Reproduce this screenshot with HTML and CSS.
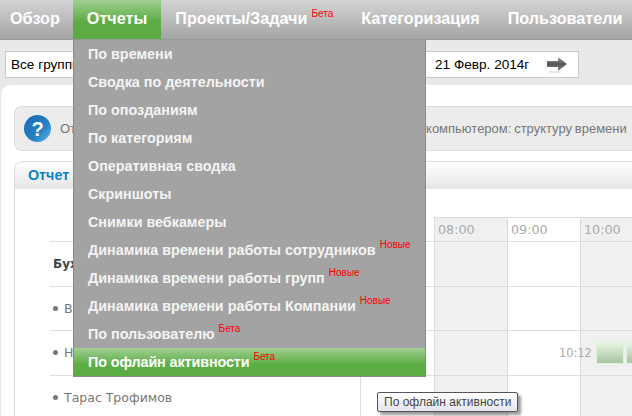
FILE: index.html
```html
<!DOCTYPE html>
<html lang="ru">
<head>
<meta charset="utf-8">
<title>Отчеты</title>
<link rel="stylesheet" href="styles.css">
</head>
<body>
<nav class="nav">
  <a class="nav-item nav-first">Обзор</a>
  <a class="nav-item nav-active">Отчеты</a>
  <a class="nav-item">Проекты/Задачи<sup class="tag">Бета</sup></a>
  <a class="nav-item">Категоризация</a>
  <a class="nav-item">Пользователи</a>
</nav>
<section class="toolbar">
  <div class="group-select">Все группы</div>
  <div class="date-box">
    <span class="date">21 Февр. 2014г</span>
    <svg class="arrow" width="22" height="18" viewBox="0 0 22 18"><defs><linearGradient id="ag" x1="0" y1="0" x2="0" y2="1"><stop offset="0" stop-color="#a8a8a8"/><stop offset=".5" stop-color="#555"/><stop offset="1" stop-color="#8a8a8a"/></linearGradient></defs><path d="M1 5h11V1l9 7-9 7v-4H1z" fill="url(#ag)"/><path d="M3 16h12" stroke="#ddd" stroke-width="1.5"/></svg>
  </div>
</section>
<main class="content">
  <div class="info">
    <svg class="help" width="27" height="27" viewBox="0 0 27 27"><defs><linearGradient id="hg" x1="0" y1="0" x2="1" y2="1"><stop offset="0" stop-color="#1d69ad"/><stop offset=".6" stop-color="#2580c4"/><stop offset="1" stop-color="#5cbfe8"/></linearGradient></defs><circle cx="13.5" cy="13.5" r="13.5" fill="url(#hg)"/><text x="13.5" y="20.5" class="help-mark">?</text></svg>
    <p class="info-text">Отчет показывает, как сотрудники в течение дня работают за компьютером: структуру времени</p>
  </div>
  <div class="report">
    <div class="report-tab">Отчет по времени</div>
    <div class="timeline">
      <div class="cell head-blank"></div>
      <div class="cell hour hour-hidden"></div><div class="cell hour shade">08:00</div><div class="cell hour">09:00</div><div class="cell hour shade">10:00</div>
      <div class="cell name group">Бухгалтерия</div>
      <div class="cell"></div><div class="cell shade"></div><div class="cell"></div><div class="cell shade"></div>
      <div class="cell name"><i class="dot"></i>Виктор Иванов</div>
      <div class="cell"></div><div class="cell shade"></div><div class="cell"></div><div class="cell shade"></div>
      <div class="cell name"><i class="dot"></i>Николай Петров</div>
      <div class="cell"></div><div class="cell shade"></div><div class="cell"></div>
      <div class="cell shade activity"><span class="start">10:12</span><span class="block"></span><span class="block"></span></div>
      <div class="cell name"><i class="dot"></i>Тарас Трофимов</div>
      <div class="cell"></div><div class="cell shade"></div><div class="cell"></div><div class="cell shade"></div>
    </div>
  </div>
</main>
<ul class="menu">
  <li>По времени</li>
  <li>Сводка по деятельности</li>
  <li>По опозданиям</li>
  <li>По категориям</li>
  <li>Оперативная сводка</li>
  <li>Скриншоты</li>
  <li>Снимки вебкамеры</li>
  <li>Динамика времени работы сотрудников<sup class="tag">Новые</sup></li>
  <li>Динамика времени работы групп<sup class="tag">Новые</sup></li>
  <li>Динамика времени работы Компании<sup class="tag">Новые</sup></li>
  <li>По пользователю<sup class="tag">Бета</sup></li>
  <li class="menu-active">По офлайн активности<sup class="tag">Бета</sup></li>
</ul>
<div class="tooltip">По офлайн активности</div>
</body>
</html>
```
FILE: styles.css
```css
* { box-sizing: border-box; }
html, body { margin: 0; height: 416px; overflow: hidden; }
body { position: relative; width: 632px; background: #e9e9e9; font-family: "Liberation Sans", Arial, sans-serif; }
.nav { display: flex; height: 40px; background: linear-gradient(#d4d4d4, #a4a4a4); border-bottom: 1px solid #999; }
.nav-item { display: block; height: 39px; padding: 0 14px; line-height: 37px; font-size: 16.2px; font-weight: bold; color: #fff; white-space: nowrap; }
.nav-first { padding-left: 10px; padding-right: 13px; }
.nav-active { background: linear-gradient(#a0cf92, #5cad44 55%, #5aab42); }
.tag { font-size: 10px; font-weight: normal; color: #f00; vertical-align: 7px; line-height: 0; margin-left: 4px; }
.toolbar { display: flex; justify-content: space-between; height: 45px; padding: 11px 53px 7px 5px; }
.group-select { width: 200px; height: 27px; background: #fff; border: 1px solid #ccc; padding-left: 5px; font-size: 13.6px; line-height: 25px; color: #000; }
.date-box { display: flex; align-items: center; width: 200px; height: 27px; background: #fff; border: 1px solid #ccc; padding-left: 55px; gap: 17px; }
.date { font-size: 13.6px; color: #000; white-space: nowrap; }
.content { height: 331px; margin-left: 1px; background: #fff; border-radius: 10px 0 0 0; padding: 21px 0 0 13px; overflow: hidden; }
.info { display: flex; align-items: center; height: 45px; padding-left: 9px; gap: 9px; background: #ececec; border: 1px solid #ddd; border-right: 0; border-radius: 8px 0 0 8px; }
.help { flex: none; }
.help-mark { font: bold 20px "Liberation Sans", sans-serif; fill: #fff; text-anchor: middle; }
.info-text { margin: 0; font-size: 13px; word-spacing: -.85px; color: #777; white-space: nowrap; }
.report { margin-top: 10px; border-left: 1px solid #d9d9d9; border-top-left-radius: 8px; }
.report-tab { height: 28px; padding: 4px 0 0 13px; background: linear-gradient(#fff, #e6e6e6); border-top: 1px solid #ddd; border-top-left-radius: 8px; font-size: 14.3px; font-weight: bold; color: #0a84c1; line-height: 18px; }
.timeline { display: grid; grid-template-columns: 310px 74px 73px 73px 60px; grid-template-rows: 24px 45px 44px 45px 42px; margin: 28px 0 0 35px; font-family: "DejaVu Sans", sans-serif; }
.cell { border-left: 1px solid #dcdcdc; border-top: 1px solid #dcdcdc; min-width: 0; }
.shade { background: #f0f0f0; }
.head-blank { border: 0; }
.hour-hidden { border-top: 0; }
.name { border-left: 0; padding-left: 3px; font-size: 12.5px; line-height: 44px; color: #777; white-space: nowrap; }
.group { font-weight: bold; color: #444; font-size: 12px; }
.dot { display: inline-block; width: 5px; height: 5px; margin-right: 6px; border-radius: 50%; background: #777; vertical-align: 2px; }
.hour { padding-left: 3px; font-size: 12.7px; line-height: 23px; color: #aaa; }
.activity { display: flex; align-items: flex-start; padding-top: 10px; }
.start { flex: none; width: 33px; margin: 5px 4px 0 -22px; font-size: 11.4px; line-height: 14px; color: #aaa; }
.block { flex: none; width: 28px; height: 23px; margin-right: 2px; border: 1px solid #dff3d8; border-radius: 2px; background: linear-gradient(#eaf7e4, #a9c4a3); }
.menu { position: absolute; left: 73px; top: 40px; width: 353px; height: 337px; margin: 0; padding: 0; list-style: none; background: #a3a3a3; border: 1px solid #8a8a8a; border-width: 0 1px 1px 1px; }
.menu li { height: 28px; padding-left: 14px; font-size: 14.35px; font-weight: bold; line-height: 28px; color: #f4f4f4; white-space: nowrap; }
.menu .menu-active { color: #fff; letter-spacing: -.1px; background: linear-gradient(#a0cf92, #5cad44 60%, #5aab42); }
.tooltip { position: absolute; left: 377px; top: 392px; height: 20px; padding: 0 6px; border: 1px solid #555; border-radius: 2px; background: linear-gradient(#fff, #e4e4f0); box-shadow: 3px 3px 3px rgba(0,0,0,.4); font-size: 12px; line-height: 18px; color: #444; white-space: nowrap; }
```
